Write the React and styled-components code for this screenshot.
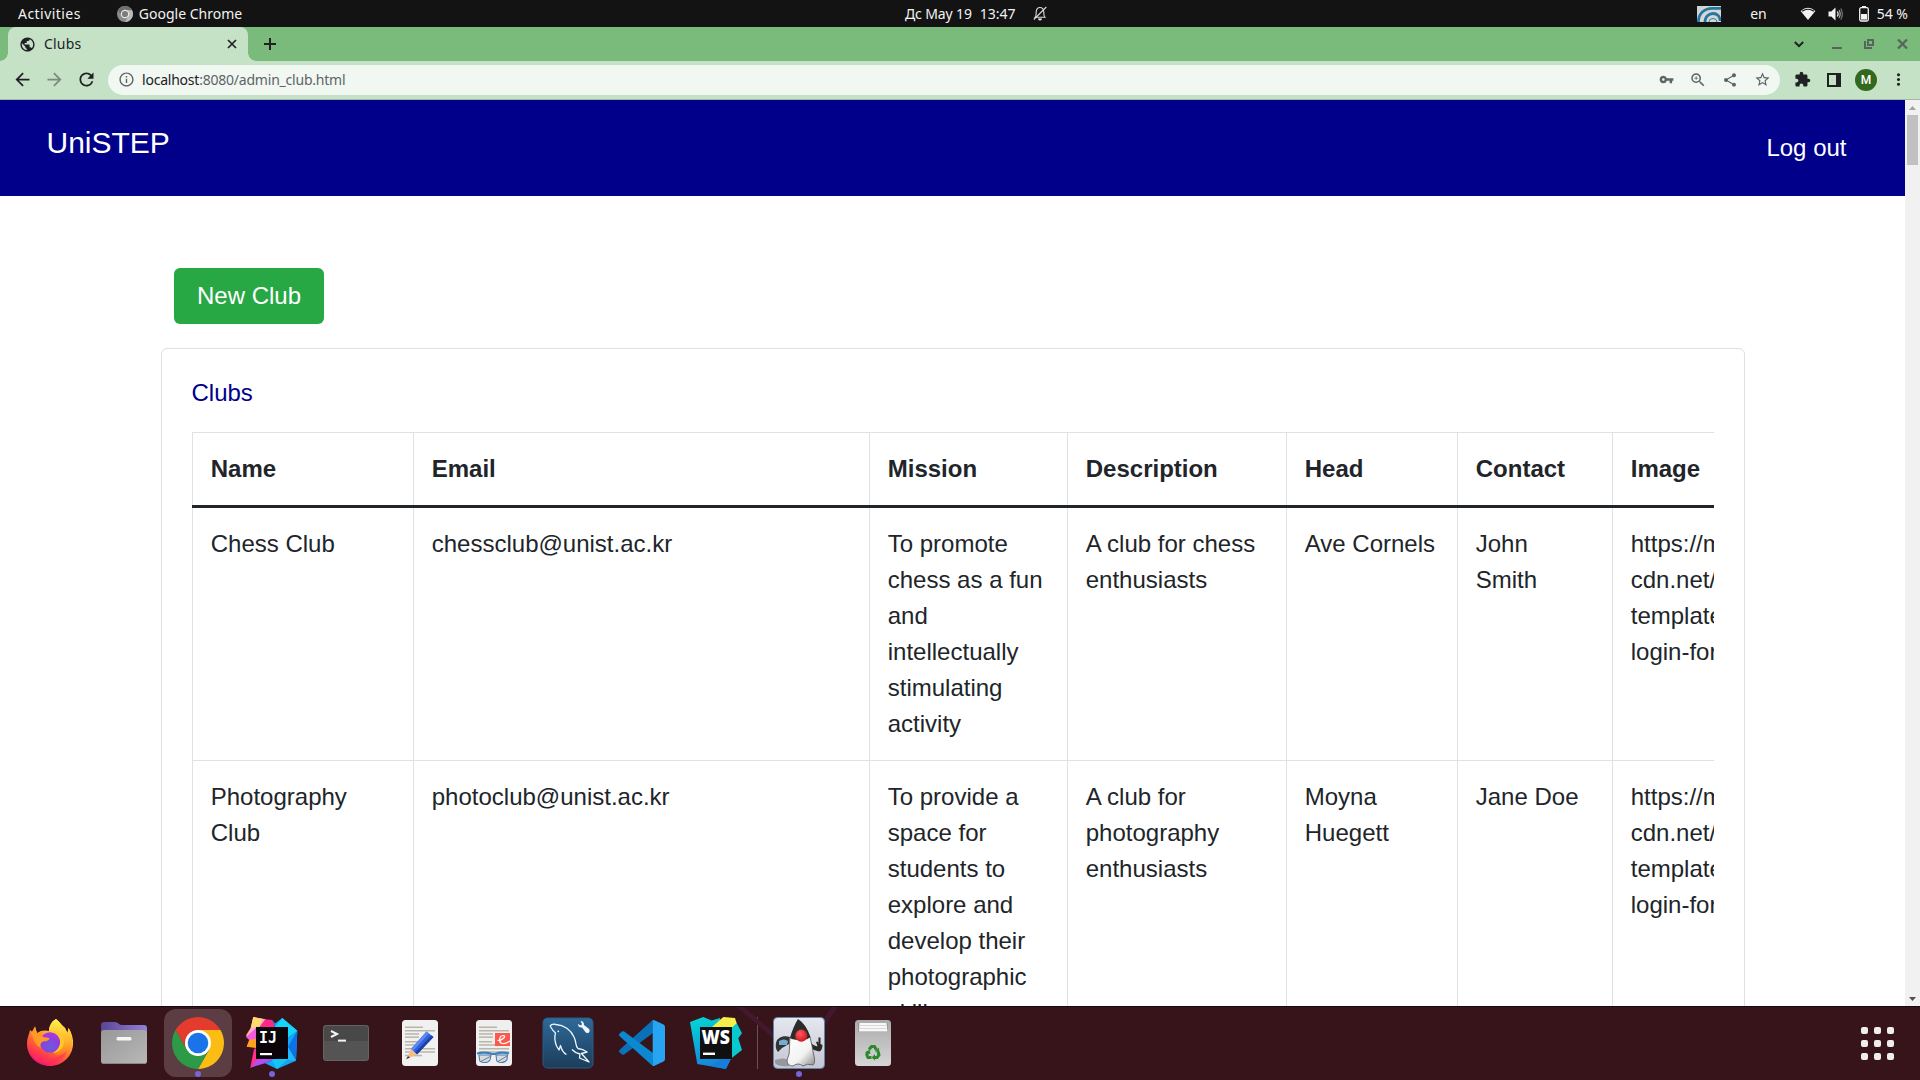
import React from 'react';
import styled, { createGlobalStyle } from 'styled-components';
import {
  MdArrowBack, MdArrowForward, MdRefresh, MdOutlineInfo, MdVpnKey, MdZoomIn,
  MdShare, MdStarOutline, MdExtension, MdMoreVert, MdPublic,
} from 'react-icons/md';

const GlobalStyle = createGlobalStyle`
  * { box-sizing: border-box; }
  body { margin: 0; background: #fff; overflow: hidden; }
  svg { display: block; flex: none; }
`;

const Desktop = styled.div`
  display: flex;
  flex-direction: column;
  width: 1920px;
  height: 1080px;
  overflow: hidden;
  font-family: 'Noto Sans', sans-serif;
  font-size: 14px;
  white-space: nowrap;
`;

/* ---------- system bar ---------- */

const SystemBar = styled.header`
  display: grid;
  grid-template-columns: 905px 1fr auto;
  align-items: center;
  flex: none;
  height: 27px;
  padding-right: 12px;
  background: #131313;
  color: #f2f2f2;
`;

const BarGroup = styled.div`
  display: flex;
  align-items: center;
  height: 27px;
`;

const Label = styled.span`
  line-height: 20px;
  margin-left: ${(p) => p.$left || 0}px;
  letter-spacing: ${(p) => p.$track || 0}px;
`;

const Slot = styled.span`
  display: flex;
  margin-left: ${(p) => p.$left || 0}px;
`;

/* ---------- browser chrome ---------- */

const TabStrip = styled.div`
  display: flex;
  flex: none;
  align-items: stretch;
  height: 34px;
  padding: 0 12px 0 8px;
  background: #7abb7c;
  color: #202124;
`;

const Tab = styled.div`
  position: relative;
  display: flex;
  align-items: center;
  width: 240px;
  padding: 0 10px 0 11px;
  border-radius: 8px 8px 0 0;
  background: #c5e1c6;

  &::before,
  &::after {
    content: '';
    position: absolute;
    bottom: 0;
    width: 8px;
    height: 8px;
  }
  &::before {
    left: -8px;
    background: radial-gradient(circle at 0 0, transparent 7.5px, #c5e1c6 8px);
  }
  &::after {
    right: -8px;
    background: radial-gradient(circle at 100% 0, transparent 7.5px, #c5e1c6 8px);
  }
`;

const TabTitle = styled.span`
  flex: 1;
  margin-left: 8px;
  padding-bottom: 2px;
  letter-spacing: 0.2px;
`;

const StripButton = styled.span`
  display: flex;
  align-items: center;
  margin-left: ${(p) => p.$left || 0}px;
`;

const Spacer = styled.span`
  flex: 1;
`;

const Toolbar = styled.div`
  display: flex;
  flex: none;
  align-items: center;
  height: 39px;
  padding: 0 6px 1px 6px;
  border-bottom: 1px solid #a5b8a6;
  background: #c5e1c6;
  color: #202124;
`;

const ToolCell = styled.span`
  display: flex;
  align-items: center;
  justify-content: center;
  width: 32px;
  height: 30px;
  opacity: ${(p) => (p.$dim ? 0.45 : 1)};
`;

const AddressBar = styled.div`
  display: flex;
  align-items: center;
  flex: 1;
  height: 30px;
  margin: 0 6px;
  padding: 0 2px;
  border-radius: 15px;
  background: #f0f8f1;
  color: #5f6368;
`;

const Url = styled.span`
  flex: 1;
  letter-spacing: -0.22px;
`;

const Host = styled.span`
  color: #202124;
`;

const Avatar = styled.span`
  display: flex;
  align-items: center;
  justify-content: center;
  width: 22px;
  height: 22px;
  border-radius: 50%;
  background: #33691e;
  color: #fff;
  font: 500 12px/22px Roboto, sans-serif;
`;

/* ---------- web page ---------- */

const Viewport = styled.div`
  display: flex;
  flex: none;
  height: 906px;
  overflow: hidden;
  background: #fff;
`;

const Page = styled.main`
  flex: 1;
  min-width: 0;
  font: 24px/36px 'Liberation Sans', Arial, sans-serif;
  color: #212529;
`;

const NavBar = styled.nav`
  display: flex;
  justify-content: space-between;
  height: 96px;
  padding: 20px 58.5px 0 46.5px;
  background: #00008b;
  color: #fff;
`;

const Brand = styled.span`
  font-size: 30px;
  line-height: 45px;
`;

const NavLink = styled.span`
  padding-top: 10px;
`;

const Content = styled.div`
  padding: 72px 160px 0 161px;
`;

const NewClubButton = styled.button`
  display: block;
  width: 150px;
  height: 56px;
  margin-left: 13px;
  padding: 0;
  border: 0;
  border-radius: 6px;
  background: #28a745;
  color: #fff;
  font: inherit;
`;

const Card = styled.section`
  height: 900px;
  margin-top: 24px;
  padding: 26px 30px;
  border: 1px solid #dfdfdf;
  border-radius: 6px;
`;

const CardTitle = styled.h5`
  margin: 0 0 21px -0.5px;
  color: #00008b;
  font-size: 24px;
  font-weight: 400;
  line-height: 36px;
`;

const TableScroll = styled.div`
  overflow: hidden;
  width: 1522px;
`;

const ClubTable = styled.div`
  width: 1900px;
  border-top: 1px solid #dee2e6;
`;

const Row = styled.div`
  display: grid;
  grid-template-columns: 221px 456px 198px 219px 171px 155px 480px;
  border-bottom: ${(p) => (p.$head ? '3px solid #212529' : '1px solid #dee2e6')};
  font-weight: ${(p) => (p.$head ? 700 : 400)};
`;

const Cell = styled.div`
  padding: 18px 0 18px 17.75px;
  border-left: 1px solid #dee2e6;
  white-space: pre;
`;

const ScrollTrack = styled.div`
  display: flex;
  flex-direction: column;
  align-items: center;
  justify-content: space-between;
  flex: none;
  width: 15px;
  background: #f1f1f1;
`;

const Thumb = styled.div`
  width: 11px;
  height: 50px;
  background: #c1c1c1;
`;

const ArrowBox = styled.span`
  display: flex;
  align-items: center;
  justify-content: center;
  width: 15px;
  height: 15px;
`;

/* ---------- dock ---------- */

const Dock = styled.footer`
  position: relative;
  display: flex;
  flex: none;
  align-items: center;
  height: 74px;
  padding: 0 6px 0 13px;
  background: #36141a;
  box-shadow: inset 0 1px 0 #150c0e;
`;

const DockWallpaper = styled.svg`
  position: absolute;
  left: 730px;
  top: 1px;
`;

const DockItem = styled.div`
  position: relative;
  display: flex;
  align-items: center;
  justify-content: center;
  width: 68px;
  height: 68px;
  margin: 0 3px;
  border-radius: 12px;
  background: ${(p) => (p.$active ? '#5b3d43' : 'transparent')};
`;

const RunningDot = styled.span`
  position: absolute;
  left: 31px;
  bottom: 0;
  width: 6px;
  height: 6px;
  border-radius: 50%;
  background: #7764d8;
`;

const DockDivider = styled.span`
  width: 1px;
  height: 52px;
  margin: 0 4px;
  background: #6b5157;
`;

const AppGrid = styled.div`
  display: grid;
  grid-template-columns: repeat(3, 7px);
  gap: 6px;
  margin-right: 20px;
`;

const GridDot = styled.span`
  width: 7px;
  height: 7px;
  border-radius: 2px;
  background: #f0eeec;
`;

/* ---------- small glyphs ---------- */

const ChromeMono = () => (
  <svg width="16" height="16" viewBox="0 0 16 16">
    <circle cx="8" cy="8" r="8" fill="#8b8b8b" />
    <path d="M1 4.2A8 8 0 0 1 15 4.2L8 4.2 4.6 10Z" fill="#6f6f6f" />
    <path d="M8 4.2H15A8 8 0 0 1 8 16L11.4 10Z" fill="#b9b9b9" />
    <circle cx="8" cy="8" r="4.3" fill="#e8e8e8" />
    <circle cx="8" cy="8" r="3.1" fill="#7c7c7c" />
  </svg>
);

const BellOff = () => (
  <svg width="14" height="15" viewBox="0 0 14 15" fill="none" stroke="#dcdcdc" strokeWidth="1.1">
    <path d="M2 11.3C3.4 10 3 8.500 3.200 6C3.400 3 5 1.500 7 1.500S10.600 3 10.800 6C11 8.500 10.600 10 12 11.300Z" />
    <path d="M.8 13.500L13.300 1" />
    <path d="M5 12.500h4a2 2 0 0 1-4 0z" fill="#eee" stroke="none" />
  </svg>
);

const NetBeansTray = () => (
  <svg width="24" height="16" viewBox="0 0 24 16">
    <rect width="24" height="16" fill="#d6d6d6" />
    <g fill="none" stroke="#2377a0" strokeWidth="2.8">
      <path d="M1.400 16C1.400 7 8 2.300 15 2.300H24" />
      <path d="M8 16C8 10.500 12 7.500 16 7.500S23 10.500 23.300 15" />
    </g>
    <path d="M12 16A4 3.500 0 0 1 20 16" fill="none" stroke="#2377a0" strokeWidth=".9" />
    <path d="M0 0H8Q1.500 3 0 9.500Z" fill="#c9d2d6" />
  </svg>
);

const Wifi = () => (
  <svg width="16" height="14" viewBox="0 0 16 14">
    <path d="M.6 4Q8-2.400 15.400 4L8 13Z" fill="#f2f2f2" />
    <path d="M2.100 4.300Q8 .2 13.900 4.300" fill="none" stroke="#131313" strokeWidth="1.200" />
  </svg>
);

const Volume = () => (
  <svg width="16" height="14" viewBox="0 0 16 14">
    <path d="M.5 4.500h2.800L7.500.5v13L3.300 9.500H.5Z" fill="#f2f2f2" />
    <g fill="none" strokeWidth="1.200">
      <path d="M9.300 4.500Q11 7 9.300 9.500" stroke="#f2f2f2" />
      <path d="M11 3Q13.400 7 11 11" stroke="#aaa" />
      <path d="M12.700 1.500Q16 7 12.700 12.500" stroke="#777" />
    </g>
  </svg>
);

const Battery = () => (
  <svg width="10" height="16" viewBox="0 0 10 16">
    <rect x="3" y="0" width="4" height="2" fill="#f2f2f2" />
    <rect x=".7" y="1.700" width="8.600" height="13.300" rx="1.500" fill="none" stroke="#f2f2f2" strokeWidth="1.300" />
    <rect x="2" y="8" width="6" height="5.600" fill="#f2f2f2" />
  </svg>
);

const Stroke = ({ w, h, d, color = '#202124', width = 2 }) => (
  <svg width={w} height={h} viewBox={`0 0 ${w} ${h}`} fill="none" stroke={color} strokeWidth={width}>
    <path d={d} />
  </svg>
);

const SidePanel = () => (
  <svg width="14" height="14" viewBox="0 0 14 14">
    <path fillRule="evenodd" d="M0 0h14v14H0zM2 2v10h7V2z" fill="#202124" />
  </svg>
);

/* ---------- dock icons ---------- */

const Icon = ({ children }) => (
  <svg width="52" height="52" viewBox="0 0 52 52">{children}</svg>
);

const Firefox = () => (
  <Icon>
    <defs>
      <linearGradient id="ffBody" x1=".8" y1=".05" x2=".3" y2="1">
        <stop offset="0" stopColor="#fff44f" />
        <stop offset=".3" stopColor="#ffbd2f" />
        <stop offset=".6" stopColor="#ff6a30" />
        <stop offset=".85" stopColor="#ff2d54" />
        <stop offset="1" stopColor="#e31587" />
      </linearGradient>
      <radialGradient id="ffGlobe" cx=".5" cy=".7" r=".7">
        <stop offset="0" stopColor="#6a5bdc" />
        <stop offset=".6" stopColor="#8a41dd" />
        <stop offset="1" stopColor="#b833e1" />
      </radialGradient>
      <linearGradient id="ffFlame" x1="0" y1="0" x2="0" y2="1">
        <stop offset="0" stopColor="#fff14b" />
        <stop offset=".6" stopColor="#ffb52b" />
        <stop offset="1" stopColor="#ff7426" />
      </linearGradient>
    </defs>
    <path d="M32 2C36 5 37 8 41 11L43.500 16 44.500 11C48 16 49.500 22 49 28C48 40 38 49 26 49S3 40 3 27C3 21 5 18 6 13L8 15 11 9.500 13 16C17 13 22 13 25 14C25 9 28 4 32 2Z" fill="url(#ffBody)" />
    <path d="M32 2C36 5 37 8 41 11L43.500 16 44.500 11C48 16 49 24 47 31C43 40 34 40 29 35C36 32 38 24 34 18C31 14 27 16 25 14C25 9 28 4 32 2Z" fill="url(#ffFlame)" />
    <circle cx="26" cy="25.500" r="10.300" fill="url(#ffGlobe)" />
    <path d="M6 13L8 15 11 9.500 13 16C17 17 19 19 19 20L25.500 21C25 24 22 24 19 24.500C16 26 16 29 17 31C12 29 10 24 9 20Z" fill="#ff9a26" />
    <path d="M25.500 14C31 15 35 18 36 23C37 29 33 34 29 36C36 35 41 30 40 22C38 16 33 13 25.500 14Z" fill="#ffc62d" />
    <path d="M7 34C13 43 28 46 43 34C39 44 32 47 25 47S10 42 7 34Z" fill="#ff3157" opacity=".65" />
  </Icon>
);

const Files = () => (
  <Icon>
    <defs>
      <linearGradient id="folder" x1="0" y1="0" x2="1" y2="1">
        <stop offset="0" stopColor="#989898" /><stop offset="1" stopColor="#b8b8b8" />
      </linearGradient>
      <linearGradient id="folderBack" x1="0" x2="1">
        <stop offset="0" stopColor="#5a4594" /><stop offset="1" stopColor="#9183d8" />
      </linearGradient>
    </defs>
    <path d="M3 8Q3 5 6 5H17Q19 5 20.500 6.500Q22 8 24 8H46Q49 8 49 11V25H3Z" fill="url(#folderBack)" />
    <rect x="3" y="13" width="46" height="34" rx="3" fill="url(#folder)" />
    <path d="M5 46.500H47" stroke="#888" />
    <rect x="18.500" y="20" width="15" height="3.400" rx="1.500" fill="#f7f7f7" />
  </Icon>
);

const Chrome = () => (
  <Icon>
    <path d="M3.500 13A26 26 0 0 1 48.500 13L26 13 14.740 32.500Z" fill="#e33b2e" />
    <path d="M26 13H48.500A26 26 0 0 1 26 52L37.260 32.500Z" fill="#fbbc13" />
    <path d="M3.500 13A26 26 0 0 0 26 52L37.260 32.500H14.740Z" fill="#2c9a47" />
    <circle cx="26" cy="26" r="13" fill="#fff" />
    <circle cx="26" cy="26" r="10.300" fill="#1a73e8" />
  </Icon>
);

const Idea = () => (
  <Icon>
    <path d="M7.300 0L19.300 2.300 27 11 10 30 .7 29.700 3.300 23 0 18 4.700 11Z" fill="#ff8a3c" />
    <path d="M7.300 0L19.300 2.300 12 13 0 20 4.700 11Z" fill="#fbb0c8" />
    <path d="M7.300 0L16 2 14 9 5 11Z" fill="#ffdc6b" />
    <path d="M0 20L10 11V22L3.300 23Z" fill="#f05ce0" />
    <path d="M3.300 23L10 22V31L.7 29.700Z" fill="#ffa01e" />
    <path d="M19.300 2.300L26.300 3 30 12H12Z" fill="#ff2788" />
    <path d="M26.300 3L29 6.500 36.300 1 51.300 13.700 50 43.700 31 52 19 46.300 40 36 38 12H30Z" fill="#12a6f5" />
    <path d="M36.300 1L51.300 13.700 42 20 28 11Z" fill="#14d5fa" />
    <path d="M51.300 13.700L42 30 50 43.700Z" fill="#0d72e8" />
    <path d="M42 30L50 43.700 36 42Z" fill="#22b8ff" />
    <path d="M31 52L25 42H42Z" fill="#15c4f4" />
    <path d="M8 32L12 30 24 42 4.300 50.700Z" fill="#ff2f93" />
    <path d="M4.300 50.700L14 40 28 42 19 46.300Z" fill="#b44df2" />
    <rect x="10" y="10" width="32" height="32" fill="#0b0509" />
    <text x="13" y="26" fill="#fff" fontFamily="DejaVu Sans Mono" fontWeight="700" fontSize="16" textLength="18" lengthAdjust="spacingAndGlyphs">IJ</text>
    <rect x="14" y="36" width="12" height="2.200" fill="#fff" />
  </Icon>
);

const Terminal = () => (
  <Icon>
    <rect x="3" y="8" width="46" height="36" rx="3.500" fill="#545454" />
    <path d="M3 24V11.500Q3 8 6.500 8H45.500Q49 8 49 11.500V24Z" fill="#484848" />
    <rect x="3.500" y="8.500" width="45" height="35" rx="3" fill="none" stroke="#646464" />
    <path d="M11 14L17 17 11 20" fill="none" stroke="#f4f4f4" strokeWidth="2" />
    <rect x="18" y="22.600" width="8" height="2" fill="#f4f4f4" />
  </Icon>
);

const paperLines = (rows) =>
  rows.map(([y, w]) => <rect key={y} x="11" y={y} width={w} height="1.500" fill="#b9b5a9" />);

const TextEditor = () => (
  <Icon>
    <rect x="8" y="3" width="36" height="46" rx="3.500" fill="#f1f1f1" />
    {paperLines([[9.500, 18], [13, 30], [16.200, 14], [19.400, 14], [24, 13], [27.200, 17], [31, 30], [34.200, 30], [37.800, 17]])}
    <path d="M32.500 14.500L39.500 20 23 37.500 17 32Z" fill="#2f62dc" />
    <path d="M32.500 14.500L35 16.500 19 34 17 32Z" fill="#5c8af0" />
    <path d="M37.500 18.500L39.500 20 23 37.500 21 35.500Z" fill="#1d3fa6" />
    <path d="M17 32L23 37.500 13 42Z" fill="#f6bd83" />
    <path d="M14 39L16 40.500 12 42.300Z" fill="#3d3d3d" />
  </Icon>
);

const DocumentViewer = () => (
  <Icon>
    <rect x="8" y="3" width="36" height="46" rx="3.500" fill="#efefef" />
    {paperLines([[9.500, 18], [13, 30], [16.200, 14], [19.400, 14], [24, 13], [27.200, 17], [31, 30], [34.200, 30]])}
    <rect x="27" y="16" width="15" height="13" fill="#fb5a4b" />
    <path d="M29.500 23.500C35 23.500 39 18.500 35 18.500C31 19 30 26 35 26.500Q38 27 42 24" fill="none" stroke="#fff" strokeWidth="1.200" />
    <path d="M9 36.500Q17 34.500 24 37H27Q34 34.500 41 36.500" fill="none" stroke="#3d7fbf" strokeWidth="2.200" />
    <g fill="#d5dde4" stroke="#4a7fb0" strokeWidth="1.100">
      <path d="M11 38H23L22 43Q20 46 15.500 45.500T11.500 42Z" />
      <path d="M28 38H39.500L39 42.500Q37 46 32.500 45.500T28.500 42Z" />
    </g>
    <path d="M13 44.500L23 39M30 44.500L39 39" fill="none" stroke="#777" />
  </Icon>
);

const Workbench = () => (
  <Icon>
    <defs>
      <linearGradient id="wb" x1="0" y1="0" x2="0" y2="1">
        <stop offset="0" stopColor="#2e6a9b" /><stop offset="1" stopColor="#1c3d59" />
      </linearGradient>
    </defs>
    <rect x="1" y="1" width="50" height="50" rx="4.500" fill="url(#wb)" stroke="#285c86" />
    <path d="M8 9Q10 6.500 14 7.500C22 8 29 13 32 20C35 26 33 29 36 31.500Q41 32 45 35L39.500 36.500 47 45L37.500 41 38 37Q33 36 30 32.500M8 9Q11 14 13.500 16C12 21 13 25 14.500 29L17 33 18.500 28.500Q20 35 24.500 37.500" fill="none" stroke="#eef6fc" strokeWidth="1.300" strokeLinejoin="round" />
    <circle cx="16.300" cy="14.300" r=".9" fill="#eef6fc" />
    <path d="M38.500 4Q42 4 42 8L46.500 11.500Q48.500 13 47 15.500Q44.500 17 43 14.500L40 10.500Q36.500 11 35.800 7L39 8.500 40 7Z" fill="#eef6fc" />
  </Icon>
);

const VsCode = () => (
  <Icon>
    <path d="M3.400 33Q2.500 34.200 3.500 35.200L6 37.500Q7 38.200 8.200 37.500L37 16 36.700 3Z" fill="#0a70b8" />
    <path d="M3.400 19Q2.500 17.800 3.500 16.800L6 14.500Q7 13.800 8.200 14.500L37 36 36.700 49Z" fill="#0b88d0" />
    <path d="M36.700 3Q38 2.700 39 3.500L47.500 7.500Q49 8.200 49 10V42Q49 43.800 47.500 44.500L39 48.500Q38 49.300 36.700 49Z" fill="#27a5f2" />
  </Icon>
);

const WebStorm = () => (
  <Icon>
    <defs>
      <linearGradient id="ws" x1="0" y1="0" x2=".3" y2="1">
        <stop offset="0" stopColor="#04d9d2" /><stop offset="1" stopColor="#1585dc" />
      </linearGradient>
    </defs>
    <path d="M0 5L13.300 0 21.700 3.500 30 1 40 44 36 52 7.300 47Z" fill="url(#ws)" />
    <path d="M30 10L46.700 6 52 16.300 48.300 21.300 52 33 42.700 40.300 30 47Z" fill="#08c9cf" />
    <path d="M30 42H42L37 45 36 52 22 49.500Z" fill="#147ed8" />
    <path d="M22 10L33.300 0 45 1 46.700 6.300 38 14Z" fill="#f8f04a" />
    <rect x="10" y="10" width="32" height="32" fill="#101010" />
    <text x="11.500" y="27" fill="#fff" fontFamily="Open Sans" fontWeight="800" fontSize="19" textLength="28.500" lengthAdjust="spacingAndGlyphs">WS</text>
    <rect x="13" y="35.600" width="12" height="2.400" fill="#fff" />
  </Icon>
);

const Duke = () => (
  <Icon>
    <defs>
      <linearGradient id="dukeBg" x1="0" y1="0" x2="0" y2="1">
        <stop offset="0" stopColor="#e6e8f0" /><stop offset="1" stopColor="#c3c6d4" />
      </linearGradient>
      <linearGradient id="dukeBody" x1="0" y1="0" x2="1" y2="1">
        <stop offset="0" stopColor="#fff" /><stop offset=".6" stopColor="#f2f2f2" /><stop offset="1" stopColor="#8a8a8a" />
      </linearGradient>
      <radialGradient id="nose" cx=".4" cy=".35" r=".7">
        <stop offset="0" stopColor="#ff5c5c" /><stop offset="1" stopColor="#c9141b" />
      </radialGradient>
    </defs>
    <rect x=".5" y=".5" width="51" height="51" rx="4" fill="url(#dukeBg)" stroke="#5d87a8" />
    <path d="M2 43Q10 40 16 43V49Q6 50 2 46Z" fill="#777" opacity=".6" />
    <path d="M17 20C11 18 4 20 3 26Q2 32 5 35L9 31 16 27Z" fill="#333" />
    <path d="M6 24Q11 21 15 24L14 28 6 28Z" fill="#79acd4" />
    <path d="M38 26Q42 30 44.500 29L43 25 45 24.500 45.500 27 45.500 20.500 47.500 20.500V27L49.500 28Q49 34 46 34.500Q41 34 38 31Z" fill="#292929" />
    <path d="M17 20L37 20Q39 28 40.500 37Q43 45 40 48Q34 46 30 49Q25 45 20 49Q14 49 14 43Q17 38 16.500 29Z" fill="url(#dukeBody)" stroke="#555" strokeWidth=".8" />
    <path d="M25 2Q33 7 37.500 20Q33 24 28 23Q20 23 17 21Q20 10 25 2Z" fill="#2b2b2b" />
    <circle cx="28.300" cy="18.700" r="6.100" fill="url(#nose)" />
  </Icon>
);

const Trash = () => (
  <Icon>
    <defs>
      <linearGradient id="bin" x1="0" y1="0" x2="0" y2="1">
        <stop offset="0" stopColor="#aaa" /><stop offset="1" stopColor="#d6d6d6" />
      </linearGradient>
    </defs>
    <rect x="8" y="3" width="36" height="46" rx="3.500" fill="url(#bin)" />
    <rect x="11" y="6" width="30" height="9" rx="1" fill="#999" />
    <path d="M12.500 6H39.500L40.500 14.500H12Z" fill="#f8f8f8" />
    <path d="M13 8.500H39M12.500 11.500H39.500" stroke="#ccc" strokeWidth=".7" />
    <g fill="none" stroke="#2c8a2c" strokeWidth="3">
      <path d="M22 32.500L24.500 29.500H27.500L29.500 33" />
      <path d="M31 34.500L32 38 30 40.500H27" />
      <path d="M24.500 40.500H21L19.800 37.500 21 35" />
    </g>
    <path d="M28 34.500L32 30.500 32.200 35ZM28 37V43.500L24.500 40.500ZM18 35.500L22.500 32.500 23.500 37Z" fill="#2c8a2c" />
  </Icon>
);

/* ---------- data ---------- */

const columns = ['Name', 'Email', 'Mission', 'Description', 'Head', 'Contact', 'Image'];

const imageUrl = 'https://media.geeks\ncdn.net/uploads\ntemplates/club\nlogin-form.png';

const clubs = [
  [
    'Chess Club',
    'chessclub@unist.ac.kr',
    'To promote\nchess as a fun\nand\nintellectually\nstimulating\nactivity',
    'A club for chess\nenthusiasts',
    'Ave Cornels',
    'John\nSmith',
    imageUrl,
  ],
  [
    'Photography\nClub',
    'photoclub@unist.ac.kr',
    'To provide a\nspace for\nstudents to\nexplore and\ndevelop their\nphotographic\nskills',
    'A club for\nphotography\nenthusiasts',
    'Moyna\nHuegett',
    'Jane Doe',
    imageUrl,
  ],
];

const pinnedApps = [
  { id: 'firefox', Art: Firefox },
  { id: 'files', Art: Files },
  { id: 'chrome', Art: Chrome, active: true, running: true },
  { id: 'idea', Art: Idea, running: true },
  { id: 'terminal', Art: Terminal },
  { id: 'editor', Art: TextEditor },
  { id: 'viewer', Art: DocumentViewer },
  { id: 'workbench', Art: Workbench },
  { id: 'vscode', Art: VsCode },
  { id: 'webstorm', Art: WebStorm },
];

const otherApps = [
  { id: 'duke', Art: Duke, running: true },
  { id: 'trash', Art: Trash },
];

const DockApps = ({ apps }) =>
  apps.map(({ id, Art, active, running }) => (
    <DockItem key={id} $active={active}>
      <Art />
      {running && <RunningDot />}
    </DockItem>
  ));

export default function App() {
  return (
    <Desktop>
      <GlobalStyle />
      <SystemBar>
        <BarGroup>
          <Label $left={18} $track={0.45}>Activities</Label>
          <Slot $left={36}><ChromeMono /></Slot>
          <Label $left={6}>Google Chrome</Label>
        </BarGroup>
        <BarGroup>
          <Label $track={-0.15}>Дс May 19</Label>
          <Label $left={8}>13:47</Label>
          <Slot $left={17}><BellOff /></Slot>
        </BarGroup>
        <BarGroup>
          <NetBeansTray />
          <Label $left={29}>en</Label>
          <Slot $left={33}><Wifi /></Slot>
          <Slot $left={12}><Volume /></Slot>
          <Slot $left={15}><Battery /></Slot>
          <Label $left={8}>54 %</Label>
        </BarGroup>
      </SystemBar>

      <TabStrip>
        <Tab>
          <MdPublic size={17} />
          <TabTitle>Clubs</TabTitle>
          <Stroke w={12} h={12} d="M2 2L10 10M10 2L2 10" width={1.7} />
        </Tab>
        <StripButton $left={16}><Stroke w={12} h={12} d="M6 0V12M0 6H12" /></StripButton>
        <Spacer />
        <StripButton><Stroke w={10} h={7} d="M.8 1L5 5.200 9.200 1" /></StripButton>
        <StripButton $left={28}><Stroke w={10} h={10} d="M0 9H10" color="#56665a" /></StripButton>
        <StripButton $left={22}><Stroke w={10} h={10} d="M4 1H9V6H4ZM1 2V9H8" color="#56665a" /></StripButton>
        <StripButton $left={23}><Stroke w={11} h={10} d="M1 .5L10 9.500M10 .5L1 9.500" color="#56665a" width={2.300} /></StripButton>
      </TabStrip>

      <Toolbar>
        <ToolCell><MdArrowBack size={21} /></ToolCell>
        <ToolCell $dim><MdArrowForward size={21} /></ToolCell>
        <ToolCell><MdRefresh size={21} /></ToolCell>
        <AddressBar>
          <ToolCell><MdOutlineInfo size={17} /></ToolCell>
          <Url><Host>localhost</Host>:8080/admin_club.html</Url>
          <ToolCell><MdVpnKey size={15} /></ToolCell>
          <ToolCell><MdZoomIn size={18} /></ToolCell>
          <ToolCell><MdShare size={16} /></ToolCell>
          <ToolCell><MdStarOutline size={17} /></ToolCell>
        </AddressBar>
        <ToolCell><MdExtension size={17} /></ToolCell>
        <ToolCell><SidePanel /></ToolCell>
        <ToolCell><Avatar>M</Avatar></ToolCell>
        <ToolCell><MdMoreVert size={19} /></ToolCell>
      </Toolbar>

      <Viewport>
        <Page>
          <NavBar>
            <Brand>UniSTEP</Brand>
            <NavLink>Log out</NavLink>
          </NavBar>
          <Content>
            <NewClubButton>New Club</NewClubButton>
            <Card>
              <CardTitle>Clubs</CardTitle>
              <TableScroll>
                <ClubTable>
                  <Row $head>
                    {columns.map((c) => <Cell key={c}>{c}</Cell>)}
                  </Row>
                  {clubs.map((club) => (
                    <Row key={club[0]}>
                      {club.map((value, i) => <Cell key={columns[i]}>{value}</Cell>)}
                    </Row>
                  ))}
                </ClubTable>
              </TableScroll>
            </Card>
          </Content>
        </Page>
        <ScrollTrack>
          <div>
            <ArrowBox>
              <svg width="7" height="4" viewBox="0 0 7 4"><path d="M0 4L3.500 0 7 4Z" fill="#a3a3a3" /></svg>
            </ArrowBox>
            <Slot $left={2}><Thumb /></Slot>
          </div>
          <ArrowBox>
            <svg width="7" height="4" viewBox="0 0 7 4"><path d="M0 0L3.500 4 7 0Z" fill="#505050" /></svg>
          </ArrowBox>
        </ScrollTrack>
      </Viewport>

      <Dock>
        <DockWallpaper width="115" height="40" viewBox="0 0 115 40" fill="none" stroke="#43182f" strokeWidth="5">
          <path d="M8 -2L50 34M106 -2L86 28" />
        </DockWallpaper>
        <DockApps apps={pinnedApps} />
        <DockDivider />
        <DockApps apps={otherApps} />
        <Spacer />
        <AppGrid>
          {Array.from({ length: 9 }, (_, i) => <GridDot key={i} />)}
        </AppGrid>
      </Dock>
    </Desktop>
  );
}
